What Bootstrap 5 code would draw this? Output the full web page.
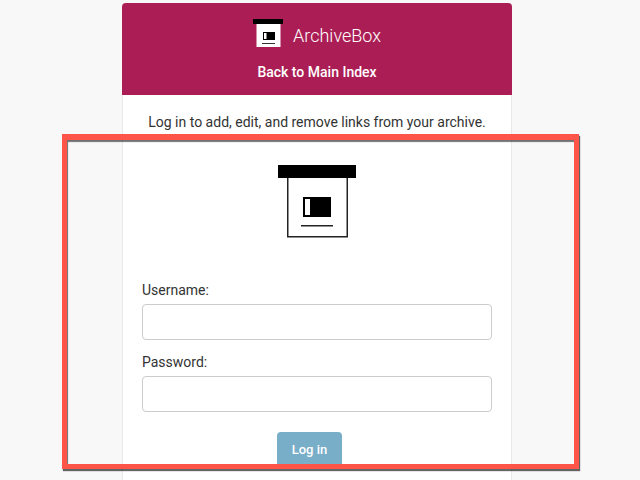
<!DOCTYPE html>
<html>
<head>
    <title>Log in - ArchiveBox</title>
    <link href="https://cdn.jsdelivr.net/npm/bootstrap@5.3.2/dist/css/bootstrap.min.css" rel="stylesheet">
    <script src="https://cdn.jsdelivr.net/npm/bootstrap@5.3.2/dist/js/bootstrap.bundle.min.js"></script>
    <style>
        html, body {
            height: 480px;
            overflow: hidden;
        }
        body {
            background-color: #f8f8f8;
            font-family: Roboto, "Liberation Sans", sans-serif;
            color: #333;
            font-size: 14px;
            position: relative;
        }
        .login-box {
            width: 390px;
            margin: 3px 0 0 122px;
            height: 477px;
            border: 1px solid #e8e8e8;
            border-bottom: 0;
            border-radius: 4px 4px 0 0;
            background: #fff;
        }
        .login-head {
            background: #ab1e55;
            height: 92px;
            margin: -1px -1px 0;
            border-radius: 4px 4px 0 0;
            color: #fff;
            padding-top: 16px;
        }
        .brand-row {
            height: 32px;
            gap: 10px;
            font-size: 18px;
            font-weight: 300;
        }
        .back-link {
            margin-top: 11px;
            font-size: 14px;
            font-weight: 500;
            color: #fff;
            text-decoration: none;
        }
        .intro {
            margin: 14px 0 0;
            line-height: 17px;
            padding-top: 5px;
        }
        .big-logo {
            display: block;
            margin: 34px 0 0 155px;
        }
        .login-form {
            padding: 44px 19px 0;
        }
        .login-form label {
            display: block;
            line-height: 17px;
            margin-bottom: 5px;
        }
        .login-form .form-control {
            height: 36px;
            border-color: #ccc;
            border-radius: 4px;
            margin-bottom: 14px;
        }
        .login-btn {
            display: block;
            width: 65px;
            height: 36px;
            margin: 20px 0 0 135px;
            padding: 0;
            border: 0;
            border-radius: 4px;
            background: #79aec8;
            color: #fff;
            font-weight: 500;
            font-size: 13px;
        }
        .red-frame {
            position: absolute;
            left: 62px;
            top: 134px;
            width: 517px;
            height: 335px;
            border: 5px solid #ff5549;
            border-top-width: 6px;
            box-shadow: 1px 2px 1px rgba(0,0,0,0.6), inset 1px 2px 1px rgba(0,0,0,0.55);
            pointer-events: none;
        }
    </style>
</head>
<body>
    <div class="login-box">
        <div class="login-head d-flex flex-column align-items-center">
            <div class="brand-row d-flex align-items-center">
                <svg width="30" height="32" viewBox="0 0 30 32">
                    <rect x="3.5" y="4" width="24" height="24" fill="#fff"/>
                    <rect x="0" y="0" width="30" height="5" fill="#000"/>
                    <rect x="10" y="13" width="12" height="8" fill="#000"/>
                    <rect x="11" y="14" width="2.5" height="6" fill="#fff"/>
                    <rect x="9" y="24" width="13" height="1" fill="#333"/>
                </svg>
                <span>ArchiveBox</span>
            </div>
            <a class="back-link" href="#">Back to Main Index</a>
        </div>
        <p class="intro text-center">Log in to add, edit, and remove links from your archive.</p>
        <svg class="big-logo" width="78" height="73" viewBox="0 0 78 73">
            <rect x="9.75" y="12" width="59.5" height="59.75" fill="#fff" stroke="#222" stroke-width="1.5"/>
            <rect x="0" y="0" width="78" height="13" fill="#000"/>
            <rect x="25" y="32" width="28" height="20" fill="#000"/>
            <rect x="27" y="34" width="5" height="16" fill="#fff"/>
            <rect x="23" y="60" width="32" height="1.5" fill="#222"/>
        </svg>
        <form class="login-form">
            <label for="username">Username:</label>
            <input type="text" id="username" class="form-control">
            <label for="password">Password:</label>
            <input type="password" id="password" class="form-control">
            <button type="button" class="btn login-btn">Log in</button>
        </form>
    </div>
    <div class="red-frame"></div>
</body>
</html>
